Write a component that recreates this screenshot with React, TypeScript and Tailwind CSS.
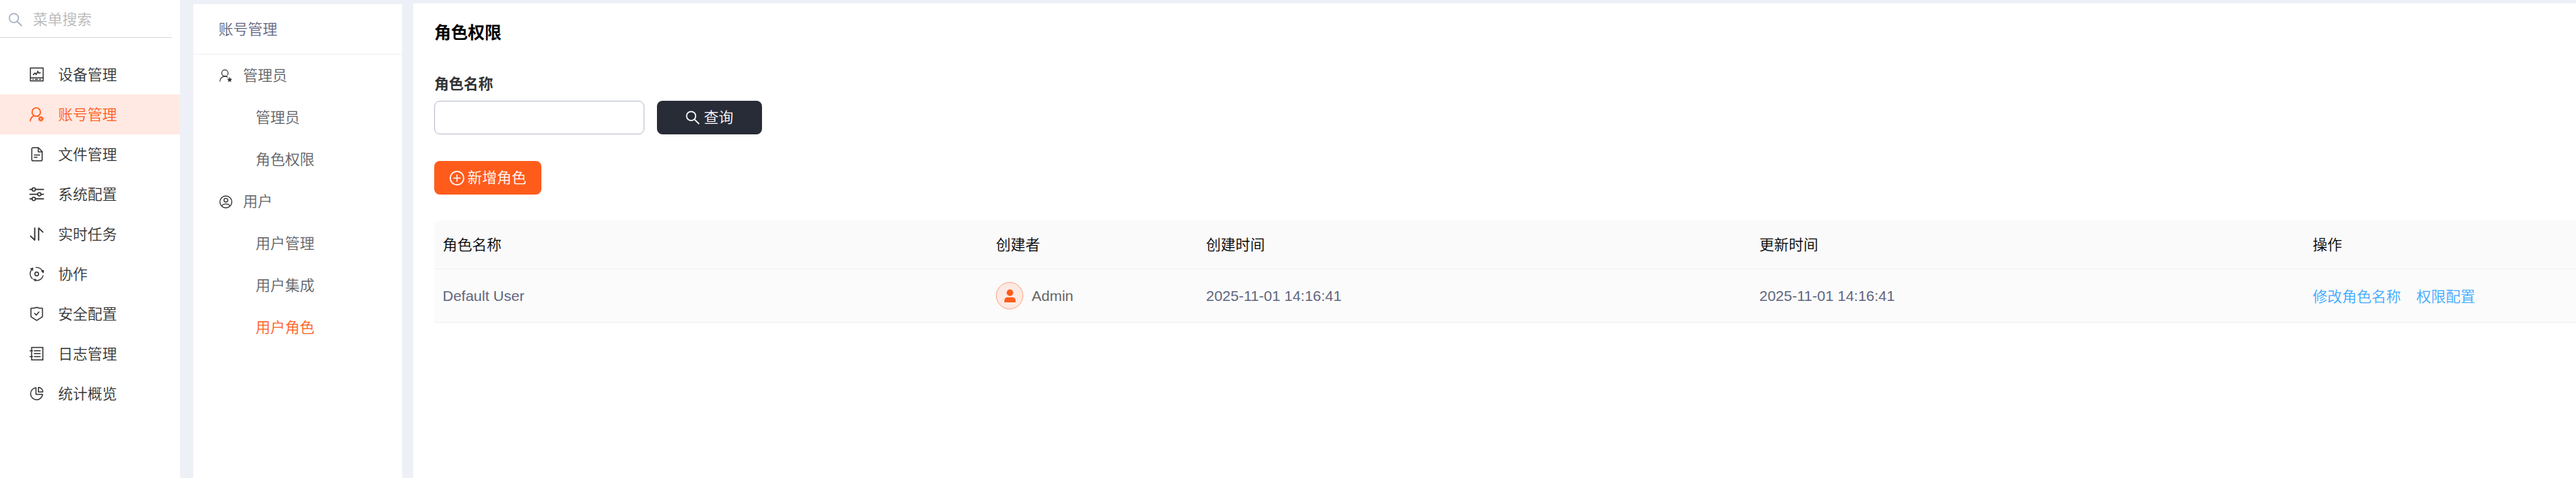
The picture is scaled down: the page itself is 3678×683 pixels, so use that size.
import { useState } from "react";
import type { ReactNode } from "react";

type MenuItem = {
  key: string;
  label: string;
  icon: ReactNode;
};

type SubGroup = {
  label: string;
  icon: ReactNode;
  children: string[];
};

type Role = {
  id: number;
  name: string;
  creator: string;
  createdAt: string;
  updatedAt: string;
};

function Svg({ children, className = "size-[21px]" }: { children: ReactNode; className?: string }) {
  return (
    <svg
      viewBox="0 0 21 21"
      className={className}
      fill="none"
      stroke="currentColor"
      strokeWidth="1.5"
      strokeLinecap="round"
      strokeLinejoin="round"
    >
      {children}
    </svg>
  );
}

const SearchIcon = ({ className }: { className?: string }) => (
  <Svg className={className}>
    <circle cx="8.2" cy="8.2" r="6.8" strokeWidth="1.8" />
    <path d="M13.2 13.2 L19.6 19.6" strokeWidth="2" />
  </Svg>
);

const menus: MenuItem[] = [
  {
    key: "device",
    label: "设备管理",
    icon: (
      <Svg>
        <rect x="1.4" y="1.2" width="18.2" height="18.4" strokeLinejoin="miter" />
        <path d="M1.4 15.3 H19.6 M4.5 17.6 H6 M8 17.6 H12 M14 17.6 H16.5" strokeLinecap="butt" />
        <path d="M5.5 10.6 L8 8.2 L9.6 10.6 L12 5.8 L13.4 8.6 L15.5 8" />
      </Svg>
    ),
  },
  {
    key: "account",
    label: "账号管理",
    icon: (
      <Svg>
        <circle cx="9.8" cy="7.2" r="6" strokeWidth="1.8" />
        <path d="M1.3 19.8 C1.6 16.2 3.6 13.7 6.6 12.4 M11.5 13.2 H12.5" strokeWidth="1.8" />
        <circle cx="16.3" cy="16.8" r="2" strokeWidth="1.9" />
        <circle cx="16.3" cy="16.8" r="3.3" strokeWidth="1.4" strokeDasharray="1.3 1.3" strokeLinecap="butt" />
      </Svg>
    ),
  },
  {
    key: "file",
    label: "文件管理",
    icon: (
      <Svg>
        <path d="M12.8 1 H5.2 Q3.4 1 3.4 2.8 V18 Q3.4 19.8 5.2 19.8 H16.4 Q18.2 19.8 18.2 18 V6.6 Z" />
        <path d="M12.6 1.4 V7 H18 M7 11.4 H14.6 M7 14.8 H11" />
      </Svg>
    ),
  },
  {
    key: "system",
    label: "系统配置",
    icon: (
      <Svg>
        <path d="M0.8 3.7 H3.8 M8.6 3.7 H20 M0.8 10.6 H11.6 M16.6 10.6 H20 M0.8 17.2 H3.8 M8.6 17.2 H20" strokeWidth="1.8" />
        <circle cx="6.2" cy="3.7" r="2.4" />
        <circle cx="14.1" cy="10.6" r="2.4" />
        <circle cx="6.2" cy="17.2" r="2.4" />
      </Svg>
    ),
  },
  {
    key: "task",
    label: "实时任务",
    icon: (
      <Svg>
        <path d="M7.6 1.8 V19 L1.6 13.4 M13.2 19 V1.8 L19.2 7.6" strokeWidth="1.8" />
      </Svg>
    ),
  },
  {
    key: "cooperate",
    label: "协作",
    icon: (
      <Svg>
        <circle cx="10.4" cy="10.4" r="2.6" />
        <path d="M9.4 1.2 A9.3 9.3 0 0 1 19.4 8 M19.4 13 A9.3 9.3 0 0 1 9 19.7 M4.2 17.3 A9.3 9.3 0 0 1 3.4 4" strokeWidth="1.3" />
        <path d="M17.6 6 L20.4 5.6 L19.8 8.8 Z M9.2 18.2 L5.6 18 L8.2 20.6 Z M1.8 3 L5 1.8 L4.8 5 Z" fill="currentColor" strokeWidth="1" />
      </Svg>
    ),
  },
  {
    key: "security",
    label: "安全配置",
    icon: (
      <Svg>
        <path d="M10.4 1.2 C12.8 2.2 15.4 2.6 18.6 2.6 V14.6 L10.4 19.8 L2.2 14.6 V2.6 C5.4 2.6 8 2.2 10.4 1.2 Z" />
        <path d="M7.4 9.8 L9.8 12.2 L13.6 7.8" />
      </Svg>
    ),
  },
  {
    key: "log",
    label: "日志管理",
    icon: (
      <Svg>
        <path d="M3.2 1.6 H19.2 V19.2 H3.2 Z M0.9 6.2 H4.4 M0.9 14.6 H4.4" strokeLinejoin="miter" />
        <path d="M7 6.2 H15.4 M7 10.3 H15.4 M7 14.6 H15.4" />
      </Svg>
    ),
  },
  {
    key: "stat",
    label: "统计概览",
    icon: (
      <Svg>
        <path d="M9.4 2 A8.6 8.6 0 1 0 18.8 11.6 H9.4 Z" />
        <path d="M12.8 1.6 V8 H19.2 C19.2 4.4 16.4 1.6 12.8 1.6 Z" />
      </Svg>
    ),
  },
];

const subMenus: SubGroup[] = [
  {
    label: "管理员",
    icon: (
      <Svg className="size-[19px]">
        <circle cx="9" cy="6" r="5" strokeWidth="1.3" />
        <path d="M1.2 19 C1.2 14.2 4.6 11.2 9 11.2 C10.6 11.2 12 11.6 13.2 12.4" strokeWidth="1.3" />
        <path
          d="M16.4 12.8 L17.5 15.1 L20 15.4 L18.1 17.1 L18.6 19.7 L16.4 18.4 L14.2 19.7 L14.7 17.1 L12.8 15.4 L15.3 15.1 Z"
          fill="currentColor"
          strokeWidth="0.5"
        />
      </Svg>
    ),
    children: ["管理员", "角色权限"],
  },
  {
    label: "用户",
    icon: (
      <Svg className="size-[19px]">
        <circle cx="10.5" cy="10.5" r="9.4" />
        <circle cx="10.5" cy="7.8" r="3" />
        <path d="M4 17 C5 14.4 7.4 13.6 10.5 13.6 C13.6 13.6 16 14.4 17 17" />
      </Svg>
    ),
    children: ["用户管理", "用户集成", "用户角色"],
  },
];

const roles: Role[] = [
  {
    id: 1,
    name: "Default User",
    creator: "Admin",
    createdAt: "2025-11-01 14:16:41",
    updatedAt: "2025-11-01 14:16:41",
  },
];

const columns = ["角色名称", "创建者", "创建时间", "更新时间", "操作"];

function Sidebar() {
  const [active, setActive] = useState("account");

  return (
    <aside className="w-[257px] shrink-0 bg-white">
      <div className="flex h-[54px] w-[245px] items-center border-b border-[#d5d7da] pl-3 text-[#a9b1c4]">
        <SearchIcon className="mt-0.5 size-[20px] shrink-0" />
        <input
          className="mt-0.5 ml-[15px] w-[180px] outline-none placeholder:text-[#b8b8b8]"
          placeholder="菜单搜索"
        />
      </div>
      <nav className="pt-6">
        {menus.map((item) => (
          <button
            key={item.key}
            onClick={() => setActive(item.key)}
            className={
              active === item.key
                ? "flex h-[57px] w-full items-center gap-[20px] bg-[#ffe9e2] pl-[42px] text-[#ff5c1c]"
                : "flex h-[57px] w-full items-center gap-[20px] pl-[42px] text-[#333333]"
            }
          >
            {item.icon}
            <span>{item.label}</span>
          </button>
        ))}
      </nav>
    </aside>
  );
}

function SubSidebar() {
  const [active, setActive] = useState("用户角色");

  return (
    <aside className="mt-1.5 ml-[19px] w-[298px] shrink-0 bg-white text-[#606266]">
      <div className="flex h-[72px] items-center border-b border-[#f0f0f0] pl-9 text-[#5f6680]">
        账号管理
      </div>
      {subMenus.map((group) => (
        <div key={group.label}>
          <div className="flex h-[60px] items-center gap-[15px] pl-[37px]">
            <span className="text-[#333333]">{group.icon}</span>
            <span>{group.label}</span>
          </div>
          {group.children.map((child) => (
            <button
              key={child}
              onClick={() => setActive(child)}
              className={
                active === child
                  ? "flex h-[60px] w-full items-center pl-[89px] text-[#ff5c1c]"
                  : "flex h-[60px] w-full items-center pl-[89px]"
              }
            >
              {child}
            </button>
          ))}
        </div>
      ))}
    </aside>
  );
}

function RoleTable({ data }: { data: Role[] }) {
  return (
    <table className="mt-[37px] w-full table-fixed border-separate border-spacing-0">
      <colgroup>
        <col className="w-[790px]" />
        <col className="w-[300px]" />
        <col className="w-[790px]" />
        <col className="w-[790px]" />
        <col />
      </colgroup>
      <thead>
        <tr className="h-[70px] text-left text-black">
          {columns.map((title) => (
            <th
              key={title}
              className="border-b border-[#f0f0f0] bg-[#fafafa] px-3 font-[350] first:rounded-tl-lg"
            >
              {title}
            </th>
          ))}
        </tr>
      </thead>
      <tbody>
        {data.map((role) => (
          <tr key={role.id} className="h-[76px] text-[#5f6680]">
            <td className="border-b border-[#f0f0f0] bg-[#fbfbfb] px-3">{role.name}</td>
            <td className="border-b border-[#f0f0f0] bg-[#fbfbfb] px-3">
              <div className="flex items-center gap-3 text-[#666666]">
                <span className="flex size-[39px] items-center justify-center rounded-full border border-[#ffa27d] bg-[#fde9e3] text-[#ff5c1c]">
                  <svg viewBox="0 0 18 20" className="h-5 w-[18px]" fill="currentColor">
                    <circle cx="9" cy="5.3" r="4.7" />
                    <path d="M1 19 V16.6 C1 13.6 3 11.8 5.6 11.8 H12.4 C15 11.8 17 13.6 17 16.6 V19 Z" />
                  </svg>
                </span>
                {role.creator}
              </div>
            </td>
            <td className="border-b border-[#f0f0f0] bg-[#fbfbfb] px-3">{role.createdAt}</td>
            <td className="border-b border-[#f0f0f0] bg-[#fbfbfb] px-3">{role.updatedAt}</td>
            <td className="border-b border-[#f0f0f0] bg-[#fbfbfb] px-3">
              <div className="flex gap-[22px] pt-[3px] text-[#40a9ff]">
                <button>修改角色名称</button>
                <button>权限配置</button>
              </div>
            </td>
          </tr>
        ))}
      </tbody>
    </table>
  );
}

export default function App() {
  const [keyword, setKeyword] = useState("");

  return (
    <div className="flex h-[683px] w-[3678px] overflow-hidden bg-[#edf1f7] font-['Liberation_Sans','Noto_Sans_CJK_SC',sans-serif] text-[21px] leading-[30px] font-[350]">
      <Sidebar />
      <SubSidebar />
      <main className="mt-[5px] ml-4 min-w-0 flex-1 bg-white pl-[30px]">
        <h1 className="pt-6 text-2xl leading-9 font-bold text-black">角色权限</h1>

        <div className="mt-10 font-bold text-[#333333]">角色名称</div>
        <div className="mt-[9px] flex gap-[18px]">
          <input
            value={keyword}
            onChange={(e) => setKeyword(e.target.value)}
            className="h-12 w-[300px] rounded-lg border border-[#b4bac9] px-4 outline-none"
          />
          <button className="flex h-12 w-[150px] items-center justify-center gap-1.5 rounded-lg bg-[#282c37] text-white">
            <SearchIcon className="size-[20px]" />
            <span>查询</span>
          </button>
        </div>

        <button className="mt-[38px] flex h-12 w-[153px] items-center justify-center gap-[5px] rounded-lg bg-[#ff5c1c] text-white">
          <Svg>
            <circle cx="10.5" cy="10.5" r="9.6" strokeWidth="1.8" />
            <path d="M10.5 5.8 V15.2 M5.8 10.5 H15.2" />
          </Svg>
          <span>新增角色</span>
        </button>

        <RoleTable data={roles} />
      </main>
    </div>
  );
}
